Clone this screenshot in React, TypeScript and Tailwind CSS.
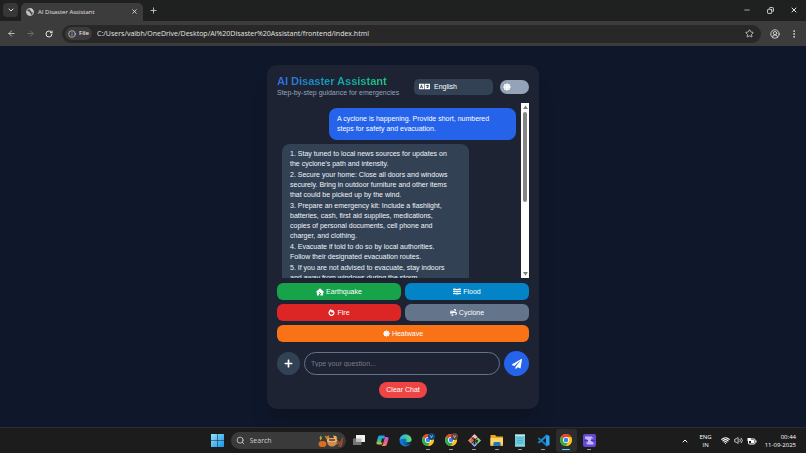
import { useState } from "react";
import type { ReactNode } from "react";
import { FaFireAlt, FaLanguage, FaPaperPlane, FaPlus } from "react-icons/fa";
import { FaHouseCrack, FaWind } from "react-icons/fa6";
import {
  ArrowLeft,
  ArrowRight,
  ChevronDown,
  ChevronUp,
  CircleUserRound,
  Copy,
  EllipsisVertical,
  Info,
  Minus,
  Plus,
  RotateCw,
  Search,
  Star,
  Volume2,
  Wifi,
  X,
} from "lucide-react";

const steps = [
  "1. Stay tuned to local news sources for updates on the cyclone's path and intensity.",
  "2. Secure your home: Close all doors and windows securely. Bring in outdoor furniture and other items that could be picked up by the wind.",
  "3. Prepare an emergency kit: Include a flashlight, batteries, cash, first aid supplies, medications, copies of personal documents, cell phone and charger, and clothing.",
  "4. Evacuate if told to do so by local authorities. Follow their designated evacuation routes.",
  "5. If you are not advised to evacuate, stay indoors and away from windows during the storm.",
];

function SunIcon({ className }: { className: string }) {
  return (
    <svg viewBox="0 0 24 24" className={className} fill="currentColor">
      <path d="M12 0l3 4 5-1 .5 5L24 12l-3.500 4-.5 5-5-1-3 4-3-4-5 1-.5-5L0 12l3.500-4L4 3l5 1z" />
      <circle cx="12" cy="12" r="6" fill="none" stroke="#000" strokeOpacity=".18" strokeWidth="1.500" />
    </svg>
  );
}

function WavesIcon() {
  return (
    <svg viewBox="0 0 24 20" className="h-[7px] w-[8px]" fill="none" stroke="currentColor" strokeWidth="4">
      <path d="M0 3.500q4-1.500 8 0t8 0 8 0M0 10q4-1.500 8 0t8 0 8 0M0 16.500q4-1.500 8 0t8 0 8 0" />
    </svg>
  );
}

const disasters = [
  { name: "Earthquake", icon: <FaHouseCrack size={8} />, style: "bg-[#16a34a]" },
  { name: "Flood", icon: <WavesIcon />, style: "bg-[#0284c7]" },
  { name: "Fire", icon: <FaFireAlt size={7} />, style: "bg-[#dc2626]" },
  { name: "Cyclone", icon: <FaWind size={7} />, style: "bg-[#64748b]" },
  { name: "Heatwave", icon: <SunIcon className="size-[7px]" />, style: "bg-[#f97316] col-span-2" },
];

function BrowserBar() {
  return (
    <header className="font-['Open_Sans',sans-serif] text-[#e3e3e3]">
      <div className="flex h-[21px] items-end bg-[#1f2120] pl-[3px]">
        <button
          aria-label="Search tabs"
          className="mb-[4px] flex h-[14px] w-[15px] items-center justify-center rounded-[4px] bg-[#363736]"
        >
          <ChevronDown size={8} strokeWidth={3} />
        </button>
        <div className="ml-[3px] flex h-[18px] w-[122px] items-center rounded-t-[5px] bg-[#3c3c3c] pr-[5px] pb-[1px] pl-[5px]">
          <svg viewBox="0 0 16 16" className="size-[8px]">
            <circle cx="8" cy="8" r="7" fill="#3c3c3c" stroke="#c7c7c7" strokeWidth="2" />
            <path d="M2 6l5 1 1 3 2 1-1 4-4-1-3-4zM8 1l-1 3 3 2 1 3 4 0-1-5-3-3z" fill="#c7c7c7" />
          </svg>
          <span className="ml-[4px] flex-1 text-[6px] leading-[10px]">AI Disaster Assistant</span>
          <button aria-label="Close tab">
            <X size={7} strokeWidth={3} />
          </button>
        </div>
        <button aria-label="New tab" className="mb-[6px] ml-[6px]">
          <Plus size={9} strokeWidth={2} />
        </button>
        <div className="mb-[7px] ml-auto flex items-center gap-[16px] pr-[8px]">
          <button aria-label="Minimize">
            <Minus size={8} strokeWidth={2} />
          </button>
          <button aria-label="Restore">
            <Copy size={7} strokeWidth={3} className="rotate-90" />
          </button>
          <button aria-label="Close">
            <X size={8} strokeWidth={3} />
          </button>
        </div>
      </div>
      <div className="flex h-[25px] items-center bg-[#3c3c3c] pl-[7px]">
        <button aria-label="Back">
          <ArrowLeft size={9} strokeWidth={2} />
        </button>
        <button aria-label="Forward" className="ml-[10px] text-[#7d7d7d]">
          <ArrowRight size={9} strokeWidth={2} />
        </button>
        <button aria-label="Reload" className="ml-[10px]">
          <RotateCw size={8} strokeWidth={3} />
        </button>
        <div className="ml-[9px] flex h-[18px] flex-1 items-center rounded-full bg-[#282828] pr-[7px] pl-[3px]">
          <span className="flex h-[13px] items-center gap-[3px] rounded-full bg-[#3c3c3c] pr-[3px] pl-[3px] text-[6px] font-semibold">
            <Info size={8} strokeWidth={2} />
            File
          </span>
          <input
            aria-label="Address"
            className="ml-[5px] h-[12px] flex-1 bg-transparent text-[7px] leading-[12px] outline-none"
            defaultValue="C:/Users/vaibh/OneDrive/Desktop/AI%20Disaster%20Assistant/frontend/index.html"
          />
          <button aria-label="Bookmark">
            <Star size={9} strokeWidth={2} />
          </button>
        </div>
        <button aria-label="Profile" className="ml-[9px]">
          <CircleUserRound size={10} strokeWidth={2} />
        </button>
        <button aria-label="Menu" className="mr-[7px] ml-[9px]">
          <EllipsisVertical size={10} strokeWidth={2} />
        </button>
      </div>
    </header>
  );
}

function Scrollbar() {
  return (
    <div className="flex w-[8px] shrink-0 flex-col items-center bg-white py-[2px]" aria-hidden="true">
      <svg viewBox="0 0 10 10" className="size-[5px]">
        <path d="M5 1l5 7H0z" fill="#7d7d7d" />
      </svg>
      <div className="mt-[2px] h-[90px] w-[4px] rounded-full bg-[#858585]" />
      <svg viewBox="0 0 10 10" className="mt-auto size-[5px]">
        <path d="M5 9L0 2h10z" fill="#7d7d7d" />
      </svg>
    </div>
  );
}

function Assistant() {
  const [light, setLight] = useState(false);
  const [question, setQuestion] = useState("");

  return (
    <section className="flex w-[272px] flex-col rounded-[10px] bg-[#1e2334] px-[10px] pt-[10px] pb-[11px] shadow-xl">
      <div className="flex h-[23px] items-center">
        <div className="flex-1">
          <h1 className="w-fit bg-linear-to-r from-[#2f6be8] to-[#22c774] bg-clip-text text-[11px] leading-[13px] font-bold whitespace-nowrap text-transparent">
            AI Disaster Assistant
          </h1>
          <p className="text-[7px] leading-[10px] whitespace-nowrap text-[#94a3b8]">
            Step-by-step guidance for emergencies
          </p>
        </div>
        <label className="flex h-[16px] w-[79px] items-center gap-[4px] rounded-[5px] bg-[#334155] pl-[5px] text-white">
          <FaLanguage size={11} />
          <select
            aria-label="Language"
            className="flex-1 appearance-none bg-transparent text-[7px] leading-[10px] outline-none"
          >
            <option>English</option>
          </select>
        </label>
        <label className="ml-[7px] flex h-[14px] w-[29px] items-center rounded-full bg-[#94a3b8] pl-[3px] text-white">
          <input
            type="checkbox"
            aria-label="Light theme"
            className="sr-only"
            checked={light}
            onChange={(e) => setLight(e.target.checked)}
          />
          <SunIcon className="size-[8px]" />
        </label>
      </div>

      <div className="mt-[5px] flex h-[175px] overflow-hidden">
        <div className="flex flex-1 flex-col gap-[4px] overflow-hidden px-[5px] pt-[5px] text-[7px] leading-[10px] text-[#f1f5f9]">
          <p className="w-[187px] shrink-0 self-end rounded-[8px] bg-[#2563eb] py-[6px] pr-[18px] pl-[8px] text-white">
            A cyclone is happening. Provide short, numbered steps for safety and evacuation.
          </p>
          <ol className="flex w-[187px] shrink-0 flex-col gap-px rounded-[8px] bg-[#334155] py-[5px] pr-[18px] pl-[8px]">
            {steps.map((step) => (
              <li key={step}>{step}</li>
            ))}
          </ol>
        </div>
        <Scrollbar />
      </div>

      <div className="mt-[5px] grid grid-cols-2 gap-[4px]">
        {disasters.map((d) => (
          <button
            key={d.name}
            className={`flex h-[17px] items-center justify-center gap-[2px] rounded-[6px] text-[7px] leading-[10px] text-white ${d.style}`}
          >
            {d.icon}
            {d.name}
          </button>
        ))}
      </div>

      <form className="mt-[9px] flex items-center gap-[4px]" onSubmit={(e) => e.preventDefault()}>
        <button
          type="button"
          aria-label="Add attachment"
          className="flex size-[23px] items-center justify-center rounded-full bg-[#334155] text-white"
        >
          <FaPlus size={9} />
        </button>
        <input
          aria-label="Your question"
          placeholder="Type your question..."
          value={question}
          onChange={(e) => setQuestion(e.target.value)}
          className="h-[23px] min-w-0 flex-1 rounded-full border border-[#64748b] bg-transparent px-[6px] text-[7px] leading-[12px] text-white outline-none placeholder:text-[#757c89]"
        />
        <button
          aria-label="Send"
          className="flex size-[25px] items-center justify-center rounded-full bg-[#2563eb] text-white"
        >
          <FaPaperPlane size={10} />
        </button>
      </form>

      <button className="mt-[6px] h-[16px] w-[48px] self-center rounded-full bg-[#ef4444] text-[7px] leading-[10px] text-white">
        Clear Chat
      </button>
    </section>
  );
}

function ChromeLogo({ badge }: { badge?: string }) {
  return (
    <svg viewBox="0 0 28 28" className="size-[14px]">
      <circle cx="14" cy="14" r="12" fill="#fbc116" />
      <path d="M14 14L3.6 8A12 12 0 0 1 24.4 8z" fill="#ea4335" />
      <path d="M3.6 8A12 12 0 0 0 14 26l5-9-5-3z" fill="#34a853" />
      <path d="M14 8h10.4A12 12 0 0 1 14 26l5.200-9z" fill="#fbc116" />
      <circle cx="14" cy="14" r="6" fill="#fff" />
      <circle cx="14" cy="14" r="4.500" fill="#3b82f0" />
      {badge && (
        <>
          <circle cx="21" cy="7" r="7" fill={badge} />
          <path d="M18.500 4.500l2.500 5 2.500-5" fill="none" stroke="#dbe4ee" strokeWidth="1.300" />
        </>
      )}
    </svg>
  );
}

function TaskIcon({ label, state, children }: { label: string; state?: string; children: ReactNode }) {
  return (
    <button
      aria-label={label}
      className={`flex h-[23px] w-[21px] flex-col items-center justify-end rounded-[3px] ${state === "active" ? "bg-[#2d2d2d]" : ""}`}
    >
      <span className="flex h-[18px] items-center">{children}</span>
      <span
        className={`mb-[2px] h-[1px] rounded-full ${
          state === "active" ? "w-[8px] bg-[#60cdff]" : state === "open" ? "w-[4px] bg-[#a0a0a0]" : "w-[4px]"
        }`}
      />
    </button>
  );
}

function Taskbar() {
  return (
    <footer className="grid h-[26px] grid-cols-[1fr_auto_1fr] items-center border-t border-[#292c33] bg-[#1c1c1c] font-['Open_Sans',sans-serif] text-white">
      <div />
      <div className="flex items-center gap-[2px]">
        <TaskIcon label="Start">
          <svg viewBox="0 0 26 26" className="size-[13px]">
            <defs>
              <linearGradient id="win" x1="0" y1="0" x2="1" y2="1">
                <stop offset="0" stopColor="#8fe3fb" />
                <stop offset="1" stopColor="#1793e6" />
              </linearGradient>
            </defs>
            <path d="M0 0h12.500v12.500H0zM13.500 0H26v12.500H13.500zM0 13.500h12.500V26H0zM13.500 13.500H26V26H13.500z" fill="url(#win)" />
          </svg>
        </TaskIcon>
        <label className="mx-[1px] flex h-[17px] w-[115px] items-center rounded-full bg-[#3a3a3a] pr-[2px] pl-[5px]">
          <Search size={9} strokeWidth={2} className="text-[#e0e0e0]" />
          <input
            aria-label="Search"
            placeholder="Search"
            className="ml-[5px] min-w-0 flex-1 bg-transparent text-[7px] leading-[12px] outline-none placeholder:text-[#cfcfcf]"
          />
          <svg viewBox="0 0 52 28" className="h-[14px] w-[26px]">
            <path d="M3 7l3-4 2 6-3 4z" fill="#a9b53c" />
            <path d="M13 3l5 2 3-3 2 6-6 3z" fill="#d98324" />
            <path d="M30 3l6 1 3 5-6 1z" fill="#f2b53a" />
            <ellipse cx="9" cy="20" rx="8" ry="6" fill="#e87520" />
            <path d="M9 14v12M5 15c-2 4-2 7 0 10M13 15c2 4 2 7 0 10" stroke="#b94f12" fill="none" />
            <path d="M18 12h20c0 8-3 13-10 13s-10-5-10-13z" fill="#d18b52" />
            <ellipse cx="28" cy="12" rx="10" ry="4" fill="#f2d2a2" />
            <ellipse cx="28" cy="12" rx="7" ry="2.500" fill="#8c4c22" />
            <path d="M37 14c5-1 5 6-1 6" stroke="#d18b52" strokeWidth="2" fill="none" />
            <path d="M41 25L50 7M45 26l4-13M40 17l7 2" stroke="#9b4c28" strokeWidth="3" />
          </svg>
        </label>
        <TaskIcon label="Task view">
          <svg viewBox="0 0 28 24" className="h-[12px] w-[14px]">
            <path d="M2 9h17v13H2z" fill="#747474" />
            <path d="M8 2h18v14H8z" fill="#f0f0f0" />
            <path d="M8 9h11v7H8z" fill="#b9b9b9" />
          </svg>
        </TaskIcon>
        <TaskIcon label="Copilot">
          <svg viewBox="0 0 26 26" className="size-[13px]">
            <defs>
              <linearGradient id="cop1" x1="0" y1="0" x2="0" y2="1">
                <stop offset="0" stopColor="#1e9bf0" />
                <stop offset=".6" stopColor="#39b98f" />
                <stop offset="1" stopColor="#f0c323" />
              </linearGradient>
              <linearGradient id="cop2" x1="0" y1="0" x2="0" y2="1">
                <stop offset="0" stopColor="#9b6cf5" />
                <stop offset=".6" stopColor="#e9569b" />
                <stop offset="1" stopColor="#f58a4a" />
              </linearGradient>
            </defs>
            <path d="M7 3h8q3 0 2 3l-4 12q-1 3-4 3H4q-4 0-3-4L4 6q1-3 3-3z" fill="url(#cop1)" />
            <path d="M18 6h4q4 0 3 4l-3 10q-1 4-4 4h-8q3-1 4-4l3-11q1-3-2-6 3 0 3 3z" fill="url(#cop2)" />
            <path d="M12 9h4l-2 8h-4z" fill="#1c1c1c" />
          </svg>
        </TaskIcon>
        <TaskIcon label="Edge">
          <svg viewBox="0 0 26 26" className="size-[13px]">
            <defs>
              <linearGradient id="edge" x1="0" y1="0" x2="1" y2="0">
                <stop offset="0" stopColor="#2ba7e5" />
                <stop offset="1" stopColor="#5bdc72" />
              </linearGradient>
            </defs>
            <circle cx="13" cy="13" r="12" fill="#1376c8" />
            <path d="M1 12C2 5 7 1 13 1c7 0 12 5 12 10 0 4-3 6-7 6-3 0-4-1-3-3 1-3-1-5-4-5-5 0-8 2-10 3z" fill="url(#edge)" />
            <path d="M11 10c-3 5 1 12 12 9-1 1-2 3-4 4-8 1-13-7-8-13z" fill="#114a8b" />
            <path d="M15 14c-1 3 4 5 9 1l1 2-2 2c-6 2-10-1-8-5z" fill="#1c1c1c" />
          </svg>
        </TaskIcon>
        <TaskIcon label="Chrome, profile one" state="open">
          <ChromeLogo badge="#0c4a83" />
        </TaskIcon>
        <TaskIcon label="Chrome, profile two" state="open">
          <ChromeLogo badge="#5e4339" />
        </TaskIcon>
        <TaskIcon label="Git" state="open">
          <svg viewBox="0 0 26 26" className="size-[13px]">
            <path d="M13 0l6 6-6 6-6-6z" fill="#f3b3a6" />
            <path d="M6 7l6 6-6 6-6-6z" fill="#e66045" />
            <path d="M20 7l6 6-6 6-6-6z" fill="#73c05b" />
            <path d="M13 14l6 6-6 6-6-6z" fill="#6a99df" />
            <path d="M13 2l11 11-11 11L2 13z" fill="none" stroke="#f0efe8" strokeWidth="1" />
            <path d="M9 6l4 4v10M13 10l5 4" fill="none" stroke="#222" strokeWidth="2" />
            <circle cx="13" cy="19" r="2" fill="#222" />
            <circle cx="18" cy="14" r="2" fill="#222" />
          </svg>
        </TaskIcon>
        <TaskIcon label="File Explorer" state="open">
          <svg viewBox="0 0 28 26" className="h-[13px] w-[14px]">
            <path d="M1 3q0-1 1-1h8l3 3h12q1 0 1 1v16H1z" fill="#e9a820" />
            <path d="M1 8h25v15H1z" fill="#ffd666" />
            <path d="M7 24v-6q0-2 2-2h10q2 0 2 2v6z" fill="#2476ba" />
            <path d="M1 21h25v3H1z" fill="#e9b53c" />
            <path d="M7 20h14v4H7z" fill="#2476ba" />
          </svg>
        </TaskIcon>
        <TaskIcon label="Notepad" state="open">
          <svg viewBox="0 0 24 26" className="h-[13px] w-[12px]">
            <path d="M2 1h20v24H2z" fill="#6fcbdc" />
            <path d="M2 1h20v3H2z" fill="#c6edf2" />
            <path d="M6 9h12M6 13h12M6 17h12" stroke="#3c96ae" strokeWidth="1" />
            <path d="M2 22h20v3H2z" fill="#8bdbe5" />
          </svg>
        </TaskIcon>
        <TaskIcon label="Visual Studio Code" state="open">
          <svg viewBox="0 0 26 26" className="size-[13px]">
            <path d="M18 1l7 3v18l-7 3z" fill="#2ba3ed" />
            <path d="M1 9l3-2 15 12v6z" fill="#1479bd" />
            <path d="M1 17l3 2L19 7V1z" fill="#1b8ad2" />
          </svg>
        </TaskIcon>
        <TaskIcon label="Chrome" state="active">
          <ChromeLogo />
        </TaskIcon>
        <TaskIcon label="Clipboard" state="open">
          <svg viewBox="0 0 26 26" className="size-[13px]">
            <rect width="26" height="26" rx="4" fill="#6548d4" />
            <path d="M4 5h13l4 4h-6l3 4h-4l7 4v4H9l-4-4h6l-4-4h4L4 9z" fill="#c9b8ff" />
            <path d="M2 13h8M16 13h8" stroke="#4c31b5" strokeWidth="2" />
          </svg>
        </TaskIcon>
      </div>
      <div className="flex items-center justify-end pr-[10px] text-[6px] leading-[8px]">
        <ChevronUp size={8} strokeWidth={3} />
        <div className="ml-[10px] text-center">
          ENG
          <br />
          IN
        </div>
        <div className="ml-[9px] flex items-center gap-[4px]">
          <Wifi size={9} strokeWidth={3} />
          <Volume2 size={9} strokeWidth={2} />
          <svg viewBox="0 0 20 16" className="h-[8px] w-[10px]">
            <rect x="3" y="4" width="13" height="10" rx="2" fill="none" stroke="#fff" strokeWidth="2" />
            <path d="M8 6h6v6H8zM17 7h2v4h-2z" fill="#fff" />
            <path d="M1 2h7v6H1z" fill="#fff" />
          </svg>
        </div>
        <div className="ml-[8px] text-right">
          00:44
          <br />
          11-09-2025
        </div>
      </div>
    </footer>
  );
}

export default function App() {
  return (
    <div className="flex min-h-screen flex-col bg-[#0f172a]">
      <BrowserBar />
      <main className="flex flex-1 justify-center pt-[19px] pb-[18px] font-['Liberation_Sans',Arial,sans-serif]">
        <Assistant />
      </main>
      <Taskbar />
    </div>
  );
}
